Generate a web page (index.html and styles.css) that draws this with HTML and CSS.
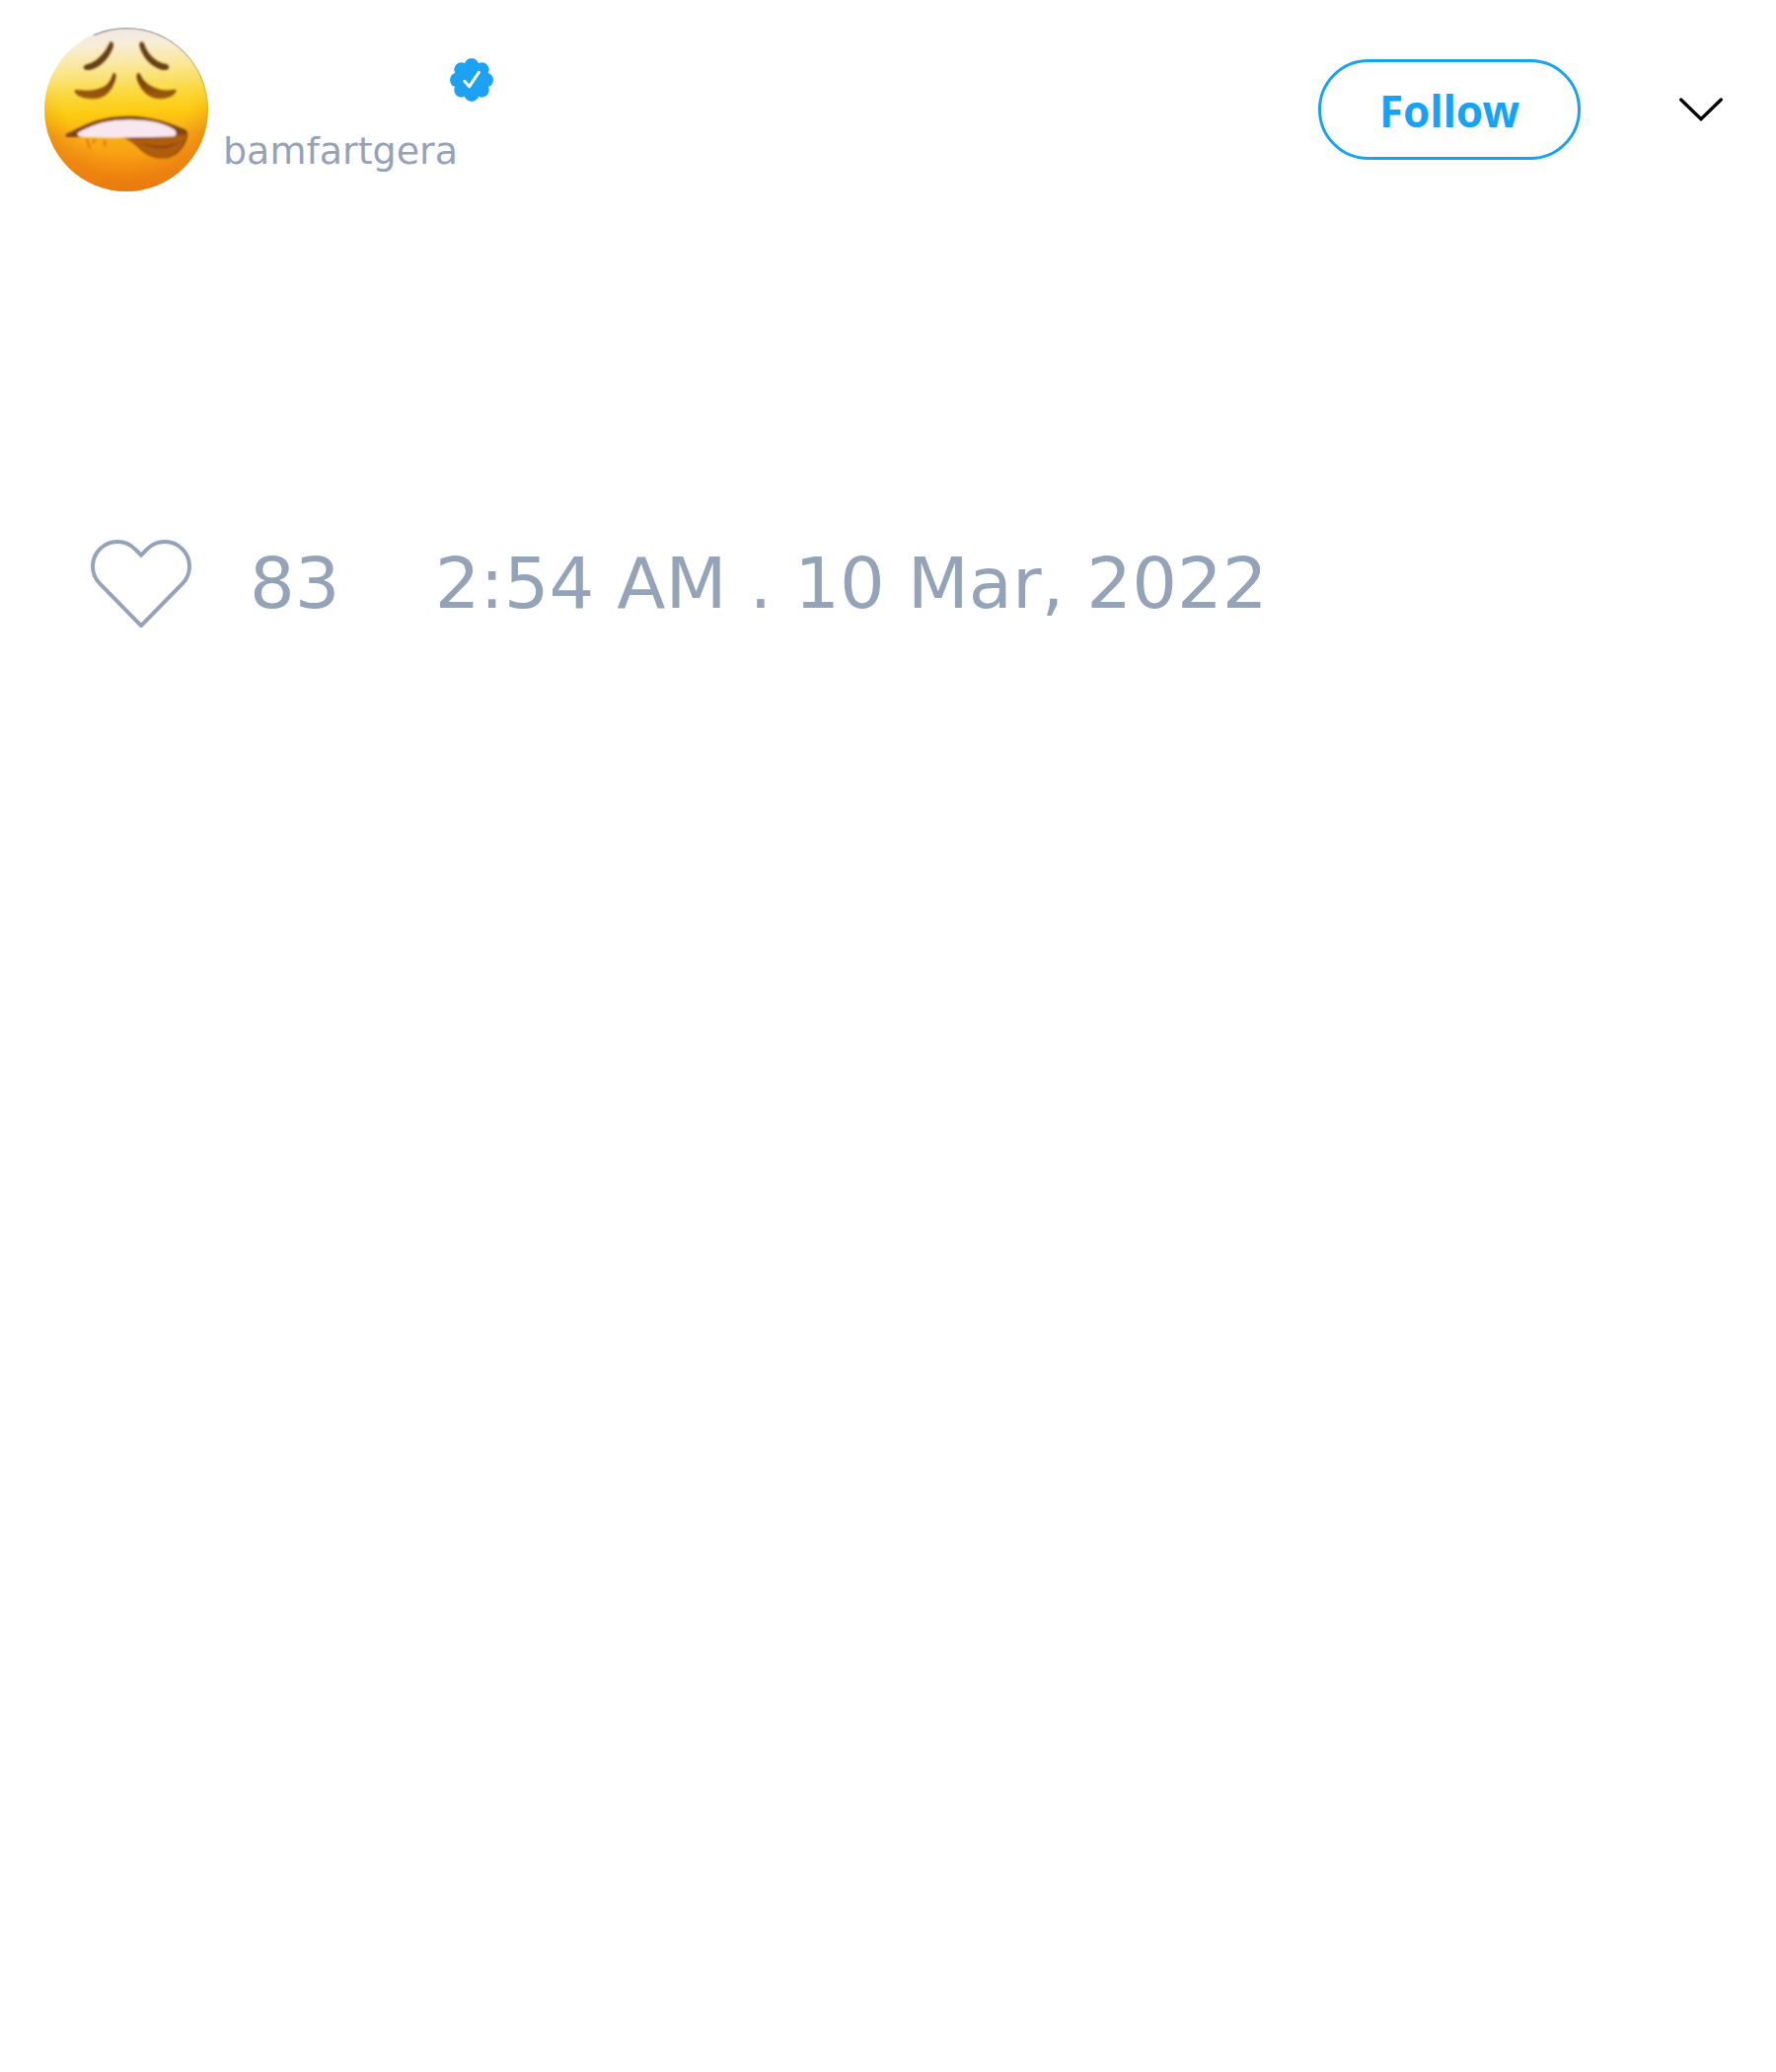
FILE: index.html
```html
<!DOCTYPE html>
<html lang="en">
<head>
  <meta charset="utf-8">
  <meta name="viewport" content="width=device-width, initial-scale=1">
  <title>bamfartgera</title>
  <link rel="stylesheet" href="styles.css">
</head>
<body>
  <article class="tweet">
    <header class="tweet-header">
      <svg class="avatar" viewBox="0 0 498 498" aria-hidden="true">
        <defs>
          <linearGradient id="skin" x1="0.45" y1="0" x2="0.5" y2="1">
            <stop offset="0" stop-color="#efe6e4"/>
            <stop offset="0.1" stop-color="#f8edd8"/>
            <stop offset="0.24" stop-color="#fae796"/>
            <stop offset="0.4" stop-color="#fbd83c"/>
            <stop offset="0.52" stop-color="#fdcb10"/>
            <stop offset="0.66" stop-color="#f9ae18"/>
            <stop offset="0.82" stop-color="#fa9a10"/>
            <stop offset="1" stop-color="#f08510"/>
          </linearGradient>
          <radialGradient id="shade" gradientUnits="userSpaceOnUse" cx="249" cy="190" r="320">
            <stop offset="0.62" stop-color="#e07010" stop-opacity="0"/>
            <stop offset="0.85" stop-color="#e07010" stop-opacity="0.45"/>
            <stop offset="1" stop-color="#e07010" stop-opacity="0.5"/>
          </radialGradient>
          <linearGradient id="fade" x1="0" y1="0" x2="0" y2="1">
            <stop offset="0.35" stop-color="#000"/>
            <stop offset="0.65" stop-color="#fff"/>
          </linearGradient>
          <mask id="lower"><rect width="498" height="498" fill="url(#fade)"/></mask>
          <linearGradient id="brown" x1="0" y1="0" x2="0" y2="1">
            <stop offset="0" stop-color="#6b3c10"/>
            <stop offset="1" stop-color="#a45c10"/>
          </linearGradient>
          <linearGradient id="rim" gradientUnits="userSpaceOnUse" x1="150" y1="0" x2="498" y2="290">
            <stop offset="0" stop-color="#8a8480"/>
            <stop offset="0.5" stop-color="#3a3028"/>
            <stop offset="0.8" stop-color="#5a3c18"/>
            <stop offset="1" stop-color="#9a5a18" stop-opacity="0"/>
          </linearGradient>
          <filter id="soften" x="-10%" y="-10%" width="120%" height="120%">
            <feGaussianBlur stdDeviation="3"/>
          </filter>
          <clipPath id="face"><circle cx="249" cy="249" r="249"/></clipPath>
        </defs>
        <g clip-path="url(#face)">
          <rect width="498" height="498" fill="url(#skin)"/>
          <rect width="498" height="498" fill="url(#shade)" mask="url(#lower)"/>
          <path d="M150 20A249 249 0 0 1 498 290" fill="none" stroke="url(#rim)" stroke-width="7" filter="url(#soften)"/>
          <g filter="url(#soften)">
            <path d="M201 43Q213 43 209 60Q186 117 138 129Q118 130 119 119Q121 113 141 108Q177 91 196 51Q198 44 201 43Z" fill="#664014"/>
            <path d="M296 43Q288 43 289 56Q306 112 358 129Q380 130 379 119Q376 110 360 109Q326 98 307 60Q303 44 296 43Z" fill="#664014"/>
            <path d="M213 137Q220 141 216 158Q199 214 151 217Q101 217 91 193Q92 187 106 190Q155 196 185 177Q201 165 207 144Q210 137 213 137Z" fill="url(#brown)"/>
            <path d="M285 137Q279 141 281 157Q301 214 350 217Q389 217 402 192Q400 186 391 189Q349 195 317 173Q299 160 292 143Q288 137 285 137Z" fill="url(#brown)"/>
            <path d="M66 323C111 304 151 271 254 269C333 269 390 294 428 310C442 318 435 343 421 363C399 394 371 403 335 395C289 384 274 341 239 333C186 330 103 334 72 333Q61 330 66 323Z" fill="#824510"/>
            <path d="M239 335C309 347 362 328 434 325C421 363 397 400 347 396C295 388 280 347 239 335Z" fill="#b05c0c"/>
            <path d="M297 350Q354 372 420 344Q397 359 373 365Q323 370 297 350Z" fill="#86450c"/>
            <path d="M101 320C136 302 174 281 253 280C330 280 370 294 396 311Q407 323 393 331C305 335 170 337 111 332Q98 328 101 320Z" fill="#f8e7ef"/>
            <path d="M129 338L138 368M154 337L148 352M183 340L184 361" fill="none" stroke="#df7b15" stroke-width="7"/>
          </g>
        </g>
      </svg>

      <div class="author">
        <div class="author-name">
          <svg class="badge" viewBox="-22 -22 44 44" role="img" aria-label="Verified account">
            <g fill="#1da1f2">
              <circle r="17"/>
              <circle cx="0" cy="-14.7" r="7.3"/>
              <circle cx="10.4" cy="-10.4" r="7.3"/>
              <circle cx="14.7" cy="0" r="7.3"/>
              <circle cx="10.4" cy="10.4" r="7.3"/>
              <circle cx="0" cy="14.7" r="7.3"/>
              <circle cx="-10.4" cy="10.4" r="7.3"/>
              <circle cx="-14.7" cy="0" r="7.3"/>
              <circle cx="-10.4" cy="-10.4" r="7.3"/>
            </g>
            <path d="M-7.3 1.3L-2.3 6.6L7.3 -7.7" fill="none" stroke="#fff" stroke-width="3" stroke-linecap="round" stroke-linejoin="round"/>
          </svg>
        </div>
        <a class="handle" href="#">bamfartgera</a>
      </div>

      <button class="follow" type="button">Follow</button>
      <button class="more" type="button" aria-label="More options">
        <svg class="chevron" viewBox="0 0 46 26" aria-hidden="true">
          <path d="M2.7 3L23 22.7L43.3 3" fill="none" stroke="#000" stroke-width="3.4" stroke-linecap="round"/>
        </svg>
      </button>
    </header>

    <div class="tweet-body"></div>

    <footer class="tweet-footer">
      <button class="like" type="button" aria-label="Like, 83 likes">
        <svg class="heart" viewBox="0 -1 102 90" aria-hidden="true">
          <path d="M51 87.2L9.3 44.7A25 25 0 0 1 44.7 9.3L51 15.7L57.3 9.3A25 25 0 0 1 92.7 44.7Z" fill="none" stroke="#94a3b8" stroke-width="4"/>
        </svg>
        <span>83</span>
      </button>
      <time datetime="2022-03-10T02:54">2:54 AM . 10 Mar, 2022</time>
    </footer>
  </article>
</body>
</html>
```
FILE: styles.css
```css
* {
  box-sizing: border-box;
}

body {
  margin: 0;
  background: #fff;
  color: #94a3b8;
  font-family: "DejaVu Sans", sans-serif;
}

button {
  padding: 0;
  border: 0;
  background: none;
  color: inherit;
  font: inherit;
  cursor: pointer;
}

svg {
  display: block;
  flex: none;
  overflow: visible;
}

.tweet-header {
  display: flex;
  align-items: center;
  padding: 28px 53px 0 45px;
}

.avatar {
  width: 166px;
  height: 166px;
  margin-right: 15px;
}

.author {
  display: flex;
  flex-direction: column;
  align-items: flex-start;
  gap: 26px;
  margin-right: auto;
  padding-top: 14px;
}

.author-name {
  display: flex;
  justify-content: flex-end;
  min-width: 274px;
}

.badge {
  width: 44px;
  height: 44px;
}

.handle {
  color: inherit;
  font-size: 38px;
  line-height: 48px;
  text-decoration: none;
}

.follow {
  width: 266px;
  height: 102px;
  padding-top: 2px;
  border: 3px solid #17a3f5;
  border-radius: 51px;
  color: #17a3f5;
  font-family: "Noto Sans", sans-serif;
  font-size: 44px;
  font-weight: 700;
}

.more {
  margin-left: 99px;
}

.chevron {
  width: 46px;
  height: 26px;
}

.tweet-body {
  min-height: 352px;
}

.tweet-footer {
  display: flex;
  align-items: center;
  gap: 96px;
  padding: 0 92px;
  font-size: 72px;
  line-height: 88px;
}

.like {
  display: flex;
  align-items: center;
  gap: 59px;
}

.heart {
  width: 102px;
  height: 90px;
}
```
